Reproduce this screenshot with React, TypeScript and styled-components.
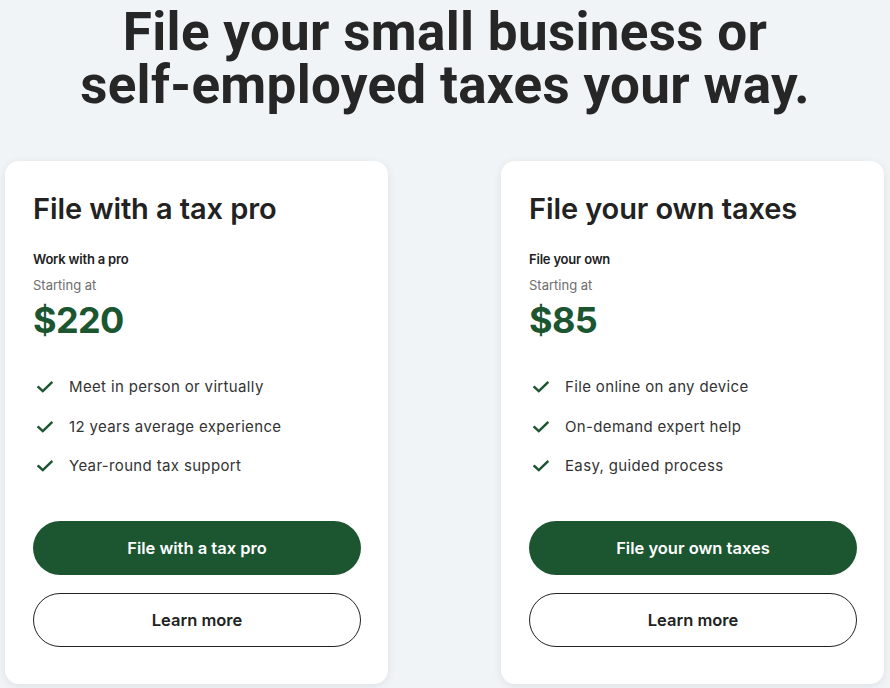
import React from "react";
import styled, { createGlobalStyle } from "styled-components";

const GlobalStyle = createGlobalStyle`
    html, body {
        margin: 0;
        padding: 0;
        background: #f0f4f7;
    }
    body {
        font-family: Inter, "Noto Sans", sans-serif;
        color: #222;
    }
`;

const Page = styled.div`
    width: 890px;
    height: 688px;
    overflow: hidden;
    background: #f0f4f7;
`;

const Headline = styled.h1`
    margin: 0;
    padding-top: 6px;
    font-family: Roboto, "Liberation Sans", sans-serif;
    font-weight: 700;
    font-size: 53px;
    line-height: 53px;
    letter-spacing: 0.3px;
    text-align: center;
    color: #262626;
`;

const CardRow = styled.div`
    display: grid;
    grid-template-columns: 383px 383px;
    justify-content: space-between;
    padding: 0 6px 0 5px;
    margin-top: 49px;
`;

const Card = styled.section`
    background: #fff;
    border-radius: 14px;
    box-shadow: 0 2px 10px rgba(0, 0, 0, 0.08);
    padding: 30px 27px 37px 28px;
    display: flex;
    flex-direction: column;
`;

const CardTitle = styled.h2`
    margin: 0;
    font-size: 29px;
    line-height: 36px;
    font-weight: 600;
    letter-spacing: -0.1px;
    color: #222;
`;

const Tagline = styled.div`
    margin-top: 23px;
    font-size: 13px;
    line-height: 18px;
    font-weight: 600;
    color: #222;
    letter-spacing: -0.2px;
`;

const StartingAt = styled.div`
    margin-top: 8px;
    font-size: 13px;
    line-height: 18px;
    color: #6e6e6e;
`;

const Price = styled.div`
    margin-top: 3px;
    font-size: 36px;
    line-height: 46px;
    font-weight: 700;
    letter-spacing: -0.6px;
    color: #1b5631;
`;

const Features = styled.ul`
    list-style: none;
    margin: 34px 0 0;
    padding: 0;
    display: flex;
    flex-direction: column;
    gap: 19.5px;
`;

const Feature = styled.li`
    display: flex;
    align-items: center;
    gap: 16px;
    font-size: 15px;
    line-height: 20px;
    letter-spacing: 0.35px;
    color: #333;
    padding-left: 4px;
`;

const Check = styled.svg`
    width: 16px;
    height: 12px;
    flex-shrink: 0;
`;

const Buttons = styled.div`
    margin-top: 45px;
    display: flex;
    flex-direction: column;
    gap: 18px;
`;

const Button = styled.button<{ $primary?: boolean }>`
    height: 54px;
    border-radius: 27px;
    font-family: Inter, "Noto Sans", sans-serif;
    font-size: 16.5px;
    font-weight: 600;
    letter-spacing: 0;
    cursor: pointer;
    border: ${p => (p.$primary ? "none" : "1px solid #222")};
    background: ${p => (p.$primary ? "#1b5631" : "#fff")};
    color: ${p => (p.$primary ? "#fff" : "#222")};
`;

const CheckIcon = () => (
    <Check viewBox="0 0 16 12" fill="none">
        <path
            d="M1.5 6.2 L5.8 10.2 L14.5 1.8"
            stroke="#1b5631"
            strokeWidth="2.4"
            strokeLinecap="square"
        />
    </Check>
);

type Plan = {
    title: string;
    tagline: string;
    price: string;
    features: string[];
    cta: string;
};

const plans: Plan[] = [
    {
        title: "File with a tax pro",
        tagline: "Work with a pro",
        price: "$220",
        features: [
            "Meet in person or virtually",
            "12 years average experience",
            "Year-round tax support"
        ],
        cta: "File with a tax pro"
    },
    {
        title: "File your own taxes",
        tagline: "File your own",
        price: "$85",
        features: [
            "File online on any device",
            "On-demand expert help",
            "Easy, guided process"
        ],
        cta: "File your own taxes"
    }
];

const PlanCard = ({ plan }: { plan: Plan }) => (
    <Card>
        <CardTitle>{plan.title}</CardTitle>
        <Tagline>{plan.tagline}</Tagline>
        <StartingAt>Starting at</StartingAt>
        <Price>{plan.price}</Price>
        <Features>
            {plan.features.map(f => (
                <Feature key={f}>
                    <CheckIcon />
                    {f}
                </Feature>
            ))}
        </Features>
        <Buttons>
            <Button $primary>{plan.cta}</Button>
            <Button>Learn more</Button>
        </Buttons>
    </Card>
);

const App = () => (
    <Page>
        <GlobalStyle />
        <Headline>
            File your small business or
            <br />
            self-employed taxes your way.
        </Headline>
        <CardRow>
            {plans.map(p => (
                <PlanCard key={p.title} plan={p} />
            ))}
        </CardRow>
    </Page>
);

export default App;
